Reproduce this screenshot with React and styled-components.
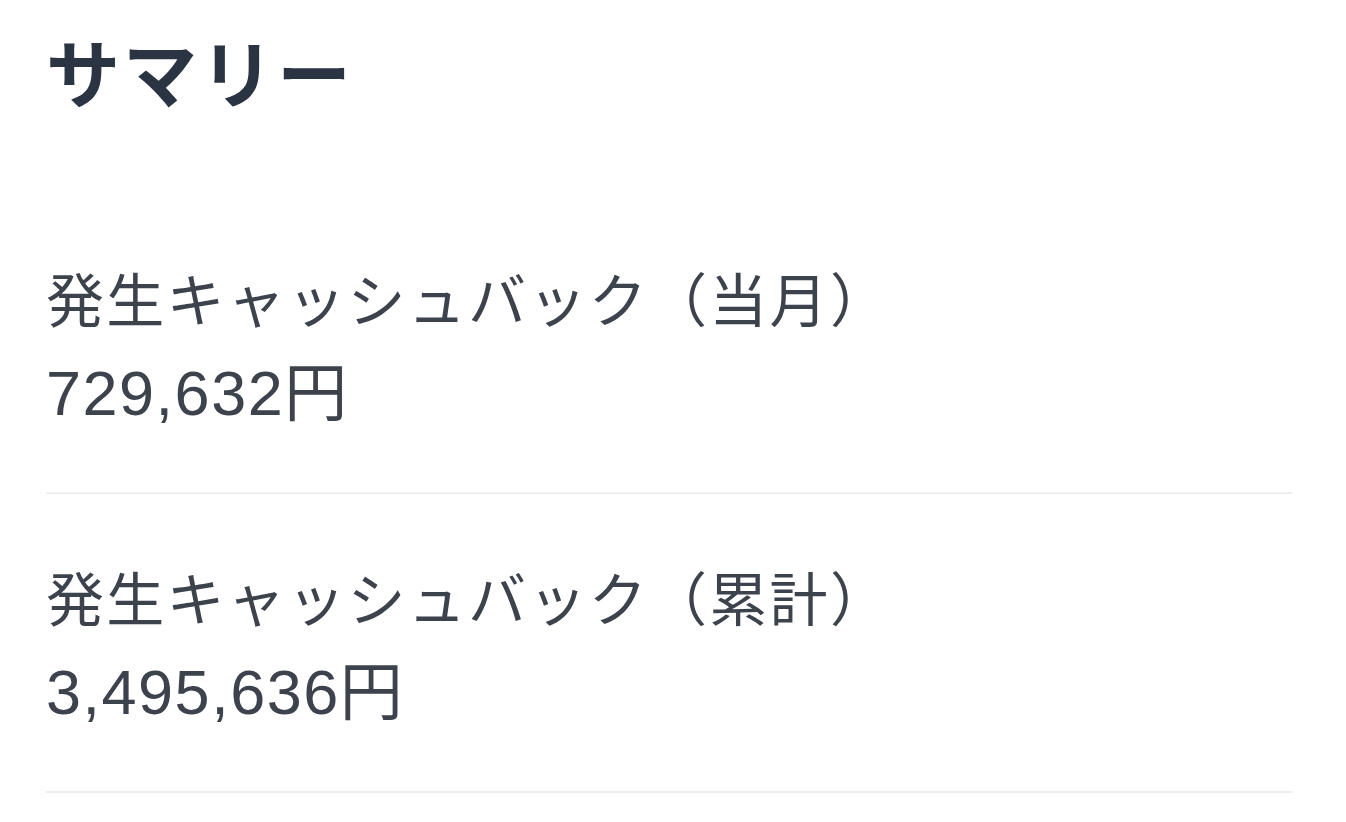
import styled, { createGlobalStyle } from "styled-components";

const GlobalStyle = createGlobalStyle`
  html, body {
    margin: 0;
    padding: 0;
    background: #ffffff;
  }
  body {
    font-family: "Noto Sans CJK JP", "Noto Sans", sans-serif;
  }
`;

const items = [
  { label: "発生キャッシュバック（当月）", value: "729,632円" },
  { label: "発生キャッシュバック（累計）", value: "3,495,636円" },
];

const App = () => {
  return (
    <>
      <GlobalStyle />
      <Summary>
        <Title>サマリー</Title>
        <List>
          {items.map((item) => (
            <Row key={item.label}>
              <Label>{item.label}</Label>
              <Value>{item.value}</Value>
            </Row>
          ))}
        </List>
      </Summary>
    </>
  );
};

export default App;

const Summary = styled.section`
  padding: 20px 54px 0 46px;
`;

const Title = styled.h2`
  margin: 0;
  font-size: 74px;
  line-height: 100px;
  font-weight: 700;
  letter-spacing: 3px;
  color: #2b3443;
`;

const List = styled.div`
  margin-top: 75px;
  display: flex;
  flex-direction: column;
`;

const Row = styled.div`
  padding: 54px 0 51px;
  border-bottom: 2px solid #eceff1;
`;

const Label = styled.div`
  font-size: 58px;
  line-height: 96px;
  letter-spacing: 2.3px;
  color: #3d434c;
  white-space: nowrap;
`;

const Value = styled(Label)`
  font-family: "Liberation Sans", "Noto Sans CJK JP", sans-serif;
  font-size: 63px;
  letter-spacing: 1.5px;
`;
